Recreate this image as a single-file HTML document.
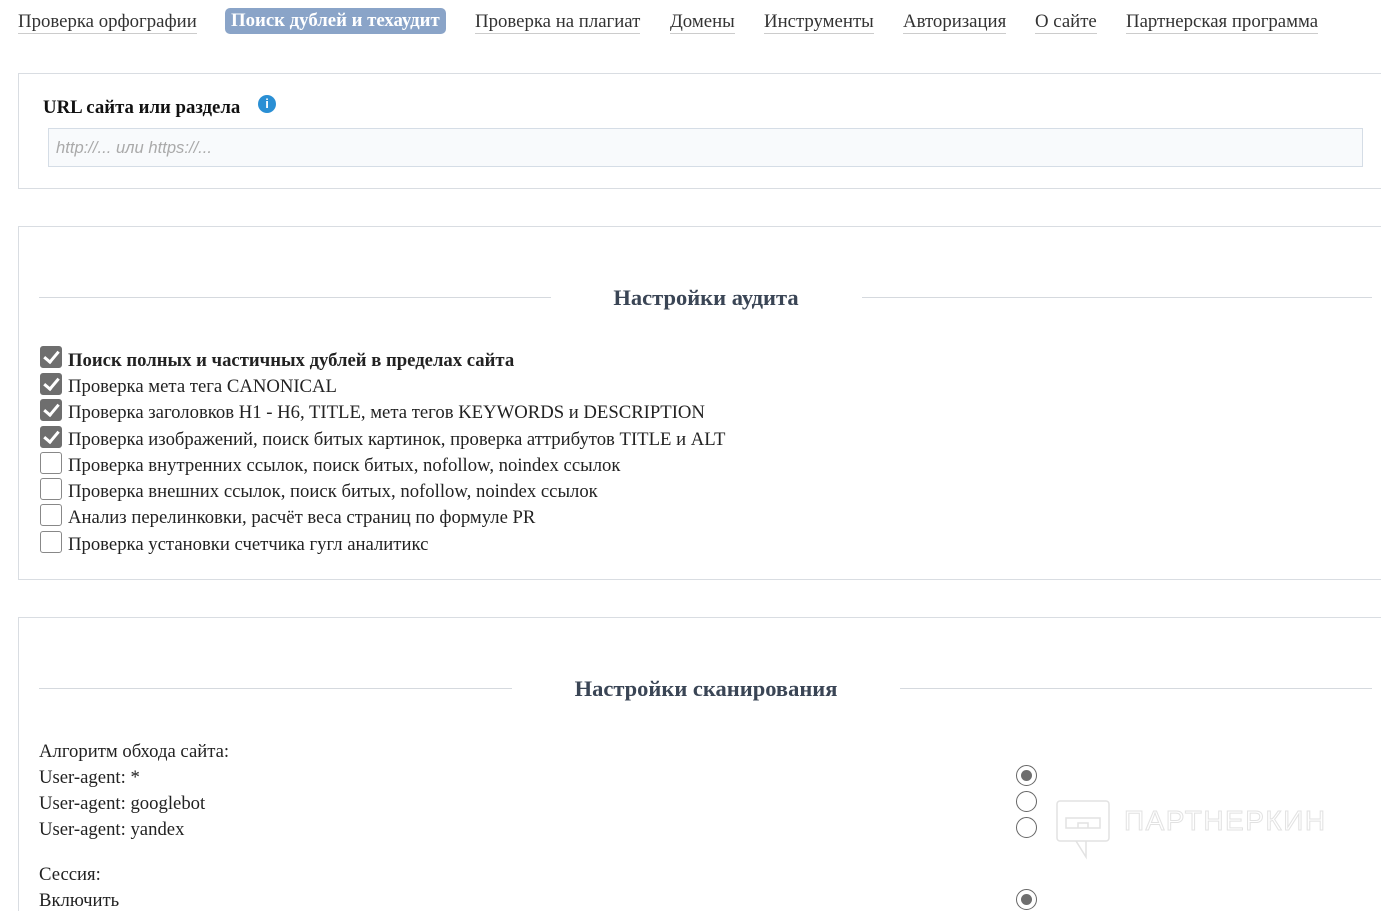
<!DOCTYPE html>
<html><head><meta charset="utf-8"><style>
html,body{margin:0;width:1381px;height:911px;overflow:hidden}
body{background:#fff;font-family:"Liberation Serif",serif;color:#222;position:relative}
.a{position:absolute;white-space:nowrap}
.nav{font-size:18.8px;top:11px;border-bottom:1px solid #ccc;line-height:22px;padding-bottom:0;color:#333}
.act{background:#8aa4c8;color:#fff;font-weight:bold;border-radius:5px;padding:0 6px;border:none;top:8px;line-height:26px;font-size:18.8px}
.box{position:absolute;left:18px;width:1380px;border:1px solid #d9dde2;border-right:none}
.hl{position:absolute;height:1px;background:#d5d9de}
h2{position:absolute;margin:0;font-size:22.5px;font-weight:bold;color:#3a4555;white-space:nowrap;transform:translateX(-50%)}
.cb{position:absolute;left:40px;width:20px;height:20px;border:1px solid #888;border-radius:3px;background:#fff}
.cb.on{background:#6e6e6e;border-color:#6e6e6e}
.cb.on:after{content:"";position:absolute;left:6px;top:1px;width:6px;height:12px;border:solid #fff;border-width:0 3px 3px 0;transform:rotate(40deg)}
.lb{position:absolute;left:68px;font-size:18.7px;line-height:22px;white-space:nowrap}
.r{position:absolute;left:1016px;width:19px;height:19px;border:1px solid #666;border-radius:50%;background:#fff}
.r.on:after{content:"";position:absolute;left:4px;top:4px;width:11px;height:11px;border-radius:50%;background:#6e6e6e}
.t{position:absolute;left:39px;font-size:18.7px;line-height:22px;white-space:nowrap}
</style></head><body>
<div class="a nav" style="left:18px">Проверка орфографии</div>
<div class="a nav act" style="left:225px">Поиск дублей и техаудит</div>
<div class="a nav" style="left:475px">Проверка на плагиат</div>
<div class="a nav" style="left:670px">Домены</div>
<div class="a nav" style="left:764px">Инструменты</div>
<div class="a nav" style="left:903px">Авторизация</div>
<div class="a nav" style="left:1035px">О сайте</div>
<div class="a nav" style="left:1126px">Партнерская программа</div>

<div class="box" style="top:73px;height:114px"></div>
<div class="a" style="left:43px;top:97px;font-size:18.8px;font-weight:bold;color:#111">URL сайта или раздела</div>
<div class="a" style="left:258px;top:95px;width:18px;height:18px;border-radius:50%;background:#2a8fd4;color:#fff;font:bold 13px 'Liberation Sans',sans-serif;text-align:center;line-height:18px">i</div>
<div class="a" style="left:48px;top:128px;width:1313px;height:37px;border:1px solid #d5dde6;background:#f8fafc"></div>
<div class="a" style="left:56px;top:138px;font:italic 16.6px 'Liberation Sans',sans-serif;color:#aaa">http://... или https://...</div>

<div class="box" style="top:226px;height:352px"></div>
<div class="hl" style="left:39px;width:512px;top:297px"></div>
<div class="hl" style="left:862px;width:510px;top:297px"></div>
<h2 style="left:706px;top:285px">Настройки аудита</h2>
<div class="cb on" style="top:346px"></div><div class="lb" style="top:350px;font-weight:bold">Поиск полных и частичных дублей в пределах сайта</div>
<div class="cb on" style="top:373px"></div><div class="lb" style="top:376px">Проверка мета тега CANONICAL</div>
<div class="cb on" style="top:399px"></div><div class="lb" style="top:402px">Проверка заголовков H1 - H6, TITLE, мета тегов KEYWORDS и DESCRIPTION</div>
<div class="cb on" style="top:426px"></div><div class="lb" style="top:429px">Проверка изображений, поиск битых картинок, проверка аттрибутов TITLE и ALT</div>
<div class="cb" style="top:452px"></div><div class="lb" style="top:455px">Проверка внутренних ссылок, поиск битых, nofollow, noindex ссылок</div>
<div class="cb" style="top:478px"></div><div class="lb" style="top:481px">Проверка внешних ссылок, поиск битых, nofollow, noindex ссылок</div>
<div class="cb" style="top:504px"></div><div class="lb" style="top:507px">Анализ перелинковки, расчёт веса страниц по формуле PR</div>
<div class="cb" style="top:531px"></div><div class="lb" style="top:534px">Проверка установки счетчика гугл аналитикс</div>

<div class="box" style="top:617px;height:294px;border-bottom:none"></div>
<div class="hl" style="left:39px;width:473px;top:688px"></div>
<div class="hl" style="left:900px;width:472px;top:688px"></div>
<h2 style="left:706px;top:676px">Настройки сканирования</h2>
<div class="t" style="top:741px">Алгоритм обхода сайта:</div>
<div class="t" style="top:767px">User-agent: *</div>
<div class="t" style="top:793px">User-agent: googlebot</div>
<div class="t" style="top:819px">User-agent: yandex</div>
<div class="t" style="top:864px">Сессия:</div>
<div class="t" style="top:890px">Включить</div>
<div class="r on" style="top:765px"></div>
<div class="r" style="top:791px"></div>
<div class="r" style="top:817px"></div>
<div class="r on" style="top:889px"></div>
<svg class="a" style="left:1056px;top:800px" width="56" height="60" viewBox="0 0 56 60" fill="none" stroke="#e2e2e2" stroke-width="1.5"><rect x="1" y="1" width="52" height="40" rx="3"/><path d="M20 41 L30 57 L30 41"/><path d="M10 18 H44 V28 H10 Z M22 28 V23 H32 V28"/></svg>
<div class="a" style="left:1124px;top:805px;font:28px 'Liberation Sans',sans-serif;color:#fff;-webkit-text-stroke:1px #e2e2e2;letter-spacing:1.5px">ПАРТНЕРКИН</div>
</body></html>
